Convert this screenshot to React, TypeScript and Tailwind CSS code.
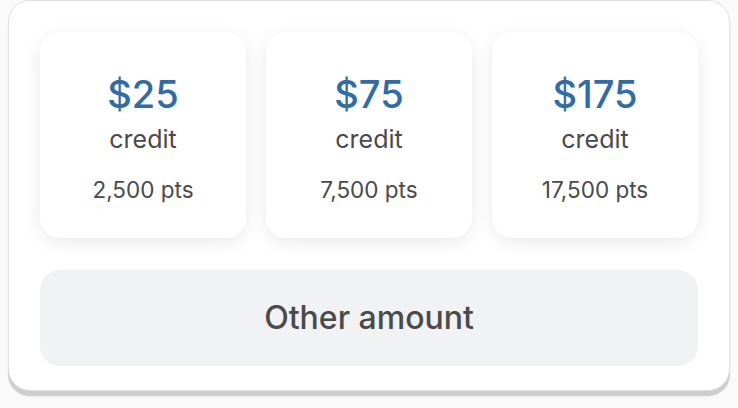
import React from "react";

const tiers = [
  { amount: "$25", pts: "2,500 pts" },
  { amount: "$75", pts: "7,500 pts" },
  { amount: "$175", pts: "17,500 pts" },
];

export default function App() {
  return (
    <div
      className="w-[738px] h-[408px] bg-[#fafafa] pl-2 overflow-hidden"
      style={{ fontFamily: "Inter, 'Liberation Sans', sans-serif" }}
    >
      <div className="w-[722px] h-[391px] rounded-[22px] border border-[#e0e0e0] bg-white shadow-[0_5px_0_#cdcdcd,0_6px_3px_rgba(0,0,0,0.06)] pl-[31px] pr-[31px] pt-[31px]">
        <div className="grid grid-cols-3 gap-5">
          {tiers.map((t) => (
            <div
              key={t.amount}
              className="h-[206px] rounded-[20px] bg-white shadow-[0_4px_18px_rgba(0,0,0,0.09)] flex flex-col items-center pt-10"
            >
              <div className="text-[38px] leading-[44px] text-[#336ca3] font-medium">{t.amount}</div>
              <div className="mt-[7px] text-[25px] leading-[32px] text-[#4a4a4a]">credit</div>
              <div className="mt-[22px] text-[22.5px] leading-[26px] text-[#4a4a4a]">{t.pts}</div>
            </div>
          ))}
        </div>
        <div className="mt-8 h-[96px] rounded-[20px] bg-[#f1f2f4] flex items-center justify-center">
          <span className="text-[32px] font-medium text-[#4a4a4a] leading-[36px]">Other amount</span>
        </div>
      </div>
    </div>
  );
}
